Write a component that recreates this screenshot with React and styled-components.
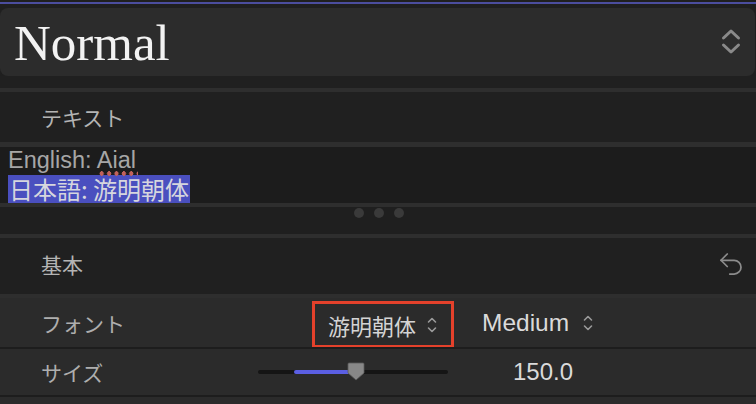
import React from "react";
import styled, { createGlobalStyle } from "styled-components";
import { Undo2 } from "lucide-react";

const GlobalStyle = createGlobalStyle`
  html, body {
    margin: 0;
    padding: 0;
    background: #1f1f1f;
  }
  body {
    font-family: "Liberation Sans", "Noto Sans CJK JP", sans-serif;
    width: 756px;
    height: 404px;
    overflow: hidden;
  }
`;

const Panel = styled.div`
  display: flex;
  flex-direction: column;
  padding-top: 2px;
  width: 756px;
`;

const TopLine = styled.div`
  height: 2px;
  background: #4b4d9e;
  margin-bottom: 4px;
`;

const StyleBox = styled.div`
  display: flex;
  align-items: center;
  justify-content: space-between;
  height: 68px;
  margin-right: 1px;
  padding: 0 14px;
  border-radius: 8px;
  background: #2c2c2c;
`;

const StyleName = styled.div`
  font-family: "Liberation Serif", "Noto Serif CJK JP", serif;
  font-size: 51px;
  color: #f2f2f2;
  line-height: 1;
  margin-top: 2px;
`;

const Gap = styled.div`
  height: ${(p) => p.h}px;
  background: ${(p) => p.bg || "#202020"};
`;

const Divider = styled.div`
  height: ${(p) => p.h || 4}px;
  background: ${(p) => p.bg || "#2e2e2e"};
`;

const Header = styled.div`
  display: flex;
  align-items: center;
  justify-content: space-between;
  box-sizing: border-box;
  height: ${(p) => p.h}px;
  padding: 0 10px ${(p) => p.pb || 0}px 41px;
  background: #202020;
  font-family: "Noto Sans CJK JP", sans-serif;
  font-size: 21px;
  color: #b4b4b4;
`;

const TextArea = styled.div`
  height: 55px;
  background: #1c1c1c;
  padding: 1px 0 0 8px;
  display: flex;
  flex-direction: column;
  align-items: flex-start;
`;

const EnglishLine = styled.div`
  font-family: "Liberation Sans", sans-serif;
  font-size: 23.5px;
  line-height: 25px;
  color: #a6a6a6;
`;

const Misspelled = styled.span`
  position: relative;
  &::after {
    content: "";
    position: absolute;
    left: 1px;
    right: -2px;
    bottom: -3px;
    height: 5px;
    background: radial-gradient(circle, #c0625a 2.1px, transparent 2.4px) 0 0 / 7.4px 5px repeat-x;
  }
`;

const SelectedLine = styled.div`
  margin-top: 2px;
  height: 28px;
  line-height: 28px;
  padding: 0 1px;
  background: #4a4fbf;
  color: #d6d6de;
  font-family: "Noto Sans CJK JP", sans-serif;
  font-size: 24px;
`;

const DotStrip = styled.div`
  height: 26px;
  background: #1f1f1f;
  display: flex;
  justify-content: center;
  gap: 10px;
  padding-top: 1px;
  padding-left: 2px;
`;

const Dot = styled.span`
  width: 10px;
  height: 10px;
  border-radius: 50%;
  background: #3a3a3a;
`;

const Row = styled.div`
  display: flex;
  align-items: center;
  height: ${(p) => p.h}px;
  background: #2b2b2b;
  padding-left: 41px;
  font-family: "Noto Sans CJK JP", sans-serif;
`;

const Label = styled.div`
  width: ${(p) => p.w}px;
  font-size: 21px;
  color: #aeaeae;
`;

const PopupBox = styled.div`
  display: flex;
  align-items: center;
  gap: 11px;
  box-sizing: border-box;
  width: 142px;
  height: 47px;
  padding-left: 13px;
  margin-top: 4px;
  border: 3px solid #e4412b;
  font-size: 22px;
  color: #d4d4d4;
`;

const PopupPlain = styled.div`
  display: flex;
  align-items: center;
  gap: 14px;
  margin-left: 28px;
  font-family: "Liberation Sans", sans-serif;
  font-size: 24.5px;
  color: #dadada;
`;

const SliderTrack = styled.div`
  position: relative;
  width: 190px;
  height: 4px;
  border-radius: 2px;
  background: #151515;
`;

const SliderFill = styled.div`
  position: absolute;
  left: 36px;
  top: 0;
  height: 4px;
  border-radius: 2px;
  background: #5b5fe3;
`;

const Thumb = styled.svg`
  position: absolute;
  top: -8px;
`;

const Value = styled.div`
  margin-left: 65px;
  font-family: "Liberation Sans", sans-serif;
  font-size: 24px;
  color: #dadada;
`;

const UpDown = ({ w = 10, h = 20, sw = 1.6, color = "#9a9a9a" }) => (
  <svg width={w} height={h} viewBox="0 0 10 20" fill="none" stroke={color} strokeWidth={sw} strokeLinecap="round" strokeLinejoin="round">
    <path d="M1.5 7 5 3.5 8.5 7" />
    <path d="M1.5 13 5 16.5 8.5 13" />
  </svg>
);

const BigUpDown = () => (
  <svg width="20" height="28" viewBox="0 0 20 28" fill="none" stroke="#8a8a8a" strokeWidth="3" strokeLinecap="round" strokeLinejoin="round">
    <path d="M2.5 10 10 3 17.5 10" />
    <path d="M2.5 17 10 24 17.5 17" />
  </svg>
);

const sizeValue = 150;
const fillStart = 36;
const thumbLeft = 89;

export default function App() {
  return (
    <>
      <GlobalStyle />
      <Panel>
        <TopLine />
        <StyleBox>
          <StyleName>Normal</StyleName>
          <BigUpDown />
        </StyleBox>
        <Gap h={12} />
        <Divider h={4} />
        <Header h={50}>テキスト</Header>
        <Divider h={5} />
        <TextArea>
          <EnglishLine>
            English: <Misspelled>Aial</Misspelled>
          </EnglishLine>
          <SelectedLine>日本語: 游明朝体</SelectedLine>
        </TextArea>
        <Divider h={4} />
        <DotStrip>
          <Dot />
          <Dot />
          <Dot />
        </DotStrip>
        <Divider h={4} />
        <Header h={56} pb={4}>
          基本
          <Undo2 size={30} color="#8c8c8c" strokeWidth={1.4} />
        </Header>
        <Divider h={4} />
        <Row h={49}>
          <Label w={271}>フォント</Label>
          <PopupBox>
            游明朝体
            <UpDown />
          </PopupBox>
          <PopupPlain>
            Medium
            <UpDown />
          </PopupPlain>
        </Row>
        <Divider h={2} bg="#1d1d1d" />
        <Row h={46}>
          <Label w={217}>サイズ</Label>
          <SliderTrack>
            <SliderFill style={{ width: thumbLeft - fillStart + 4 }} />
            <Thumb width="18" height="19" viewBox="0 0 18 19" style={{ left: thumbLeft }}>
              <path d="M2 1h14a1 1 0 0 1 1 1v9l-8 7-8-7V2a1 1 0 0 1 1-1z" fill="#888" stroke="#5a5a5a" strokeWidth="0.8" />
            </Thumb>
          </SliderTrack>
          <Value>{sizeValue.toFixed(1)}</Value>
        </Row>
        <Divider h={2} bg="#1d1d1d" />
        <Gap h={10} bg="#2b2b2b" />
      </Panel>
    </>
  );
}
